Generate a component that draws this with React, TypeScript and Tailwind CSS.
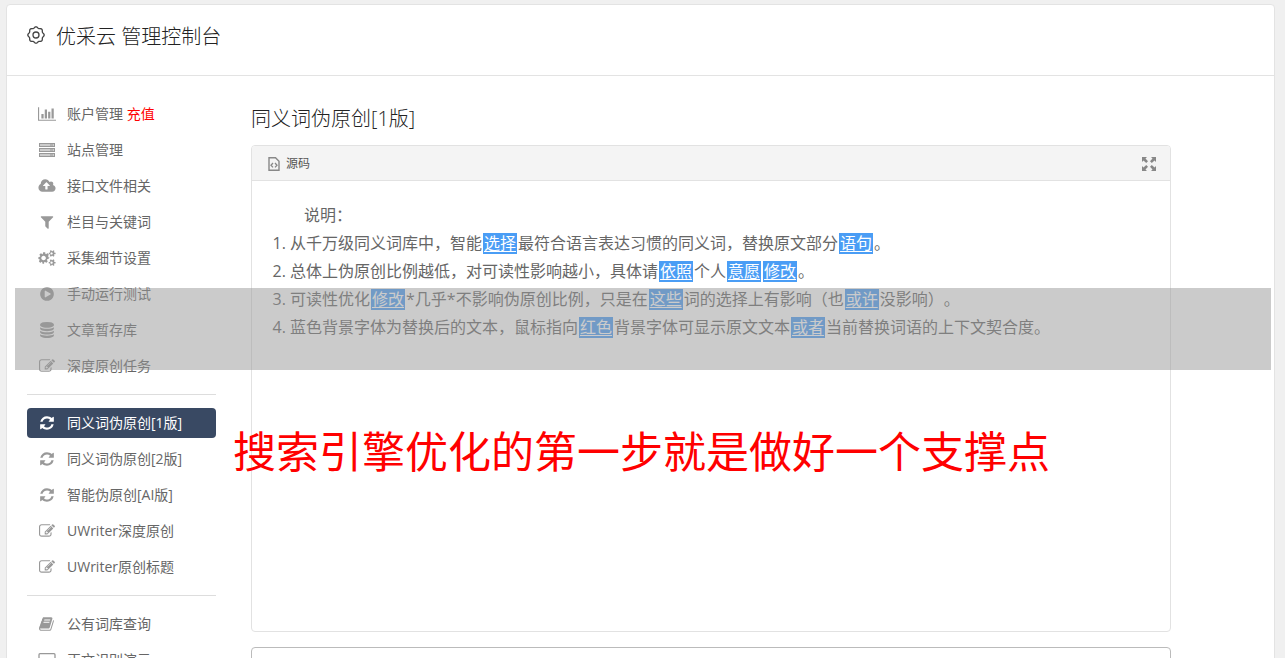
import type { ReactNode } from 'react';

const PATHS = {
  chart:
    'M640 896v512H384V896h256zm384-512v1024H768V384h256zm1024 1152v128H0V128h128v1408h1920zm-640-896v768h-256V640h256zm384-384v1152h-256V256h256z',
  upload:
    'M1280 864q0-14-9-23L919 489q-9-9-23-9t-23 9L522 840q-10 12-10 24 0 14 9 23t23 9h224v352q0 13 9.5 22.5t22.5 9.5h192q13 0 22.5-9.5t9.5-22.5V896h224q13 0 22.5-9.5t9.5-22.5zm640 288q0 159-112.5 271.5T1536 1536H448q-185 0-316.5-131.5T0 1088q0-130 70-240t188-165q-2-30-2-43 0-212 150-362t362-150q156 0 285.5 87T1242 446q71-62 166-62 106 0 181 75t75 181q0 76-41 138 130 31 213.5 135.5T1920 1152z',
  filter:
    'M1595 295q17 41-14 70l-493 493v742q0 42-39 59-13 5-25 5-27 0-45-19l-256-256q-19-19-19-45V858L211 365q-31-29-14-70 17-39 59-39h1280q42 0 59 39z',
  cogs:
    'M832 896q0-106-75-181t-181-75-181 75-75 181 75 181 181 75 181-75 75-181zm768 512q0-52-38-90t-90-38-90 38-38 90q0 53 37.500 90.500t90.500 37.500 90.500-37.500 37.500-90.500zm0-1024q0-52-38-90t-90-38-90 38-38 90q0 53 37.500 90.500T1472 512t90.500-37.500T1600 384zm-448 421v185q0 10-7 19.500t-16 10.500l-155 24q-11 35-32 76 34 48 90 115 7 11 7 20 0 12-7 19-23 30-82.500 89.500t-78.500 59.500q-11 0-21-7l-115-90q-37 19-77 31-11 108-23 155-7 24-30 24H483q-11 0-20-7.500t-10-17.500l-23-153q-34-10-75-31l-118 89q-7 7-20 7-11 0-21-8-144-133-144-160 0-9 7-19 10-14 41-53t47-61q-23-44-35-82l-152-24q-10-1-17-9.500T0 987V802q0-10 7-19.500t16-10.500l155-24q11-35 32-76-34-48-90-115-7-11-7-20 0-12 7-20 22-30 82-89t79-59q11 0 21 7l115 90q34-18 77-32 11-108 23-154 7-24 30-24h186q11 0 20 7.500t10 17.500l23 153q34 10 75 31l118-89q8-7 20-7 11 0 21 8 144 133 144 160 0 8-7 19-12 16-42 54t-45 60q23 48 34 82l152 23q10 2 17 10.500t7 19.500zm768 533v140q0 16-149 31-12 27-30 52 51 113 51 138 0 4-4 7-122 71-124 71-8 0-46-47t-52-68q-20 2-30 2t-30-2q-14 21-52 68t-46 47q-2 0-124-71-4-3-4-7 0-25 51-138-18-25-30-52-149-15-149-31v-140q0-16 149-31 13-29 30-52-51-113-51-138 0-4 4-7 4-2 35-20t59-34 30-16q8 0 46 46.500t52 67.500q20-2 30-2t30 2q51-71 92-112l6-2q4 0 124 70 4 3 4 7 0 25-51 138 17 23 30 52 149 15 149 31zm0-1024v140q0 16-149 31-12 27-30 52 51 113 51 138 0 4-4 7-122 71-124 71-8 0-46-47t-52-68q-20 2-30 2t-30-2q-14 21-52 68t-46 47q-2 0-124-71-4-3-4-7 0-25 51-138-18-25-30-52-149-15-149-31V314q0-16 149-31 13-29 30-52-51-113-51-138 0-4 4-7 4-2 35-20t59-34 30-16q8 0 46 46.500t52 67.500q20-2 30-2t30 2q51-71 92-112l6-2q4 0 124 70 4 3 4 7 0 25-51 138 17 23 30 52 149 15 149 31z',
  refresh:
    'M1639 1056q0 5-1 7-64 268-268 434.500T892 1664q-146 0-282.500-55T366 1452l-129 129q-19 19-45 19t-45-19-19-45v-448q0-26 19-45t45-19h448q26 0 45 19t19 45-19 45l-137 137q71 66 161 102t187 36q134 0 250-65t186-179q11-17 53-117 8-23 30-23h192q13 0 22.500 9.500t9.500 22.500zm25-800v448q0 26-19 45t-45 19h-448q-26 0-45-19t-19-45 19-45l138-138Q1097 384 896 384q-134 0-250 65T460 628q-11 17-53 117-8 23-30 23H178q-13 0-22.500-9.500T146 736v-7q65-268 270-434.500T896 128q146 0 284 55.500T1425 340l130-129q19-19 45-19t45 19 19 45z',
  edit:
    'M888 1184l116-116-152-152-116 116v56h96v96h56zm440-720q-16-16-33 1L945 815q-17 17-1 33t33-1l350-350q17-17 1-33zm80 594v190q0 119-84.500 203.500T1120 1536H288q-119 0-203.500-84.500T0 1248V416q0-119 84.500-203.500T288 128h832q63 0 117 25 15 7 18 23 3 17-9 29l-49 49q-14 14-32 8-23-6-45-6H288q-66 0-113 47t-47 113v832q0 66 47 113t113 47h832q66 0 113-47t47-113v-126q0-13 9-22l64-64q15-15 35-7t20 29zm-96-738l288 288-672 672H640V992zm444 132l-92 92-288-288 92-92q28-28 68-28t68 28l152 152q28 28 28 68t-28 68z',
  database:
    'M896 768q237 0 443-43t325-127v170q0 69-103 128t-280 93.500-385 34.500-385-34.500T231 896 128 768V598q119 84 325 127t443 43zm0 768q237 0 443-43t325-127v170q0 69-103 128t-280 93.500-385 34.500-385-34.500-280-93.500-103-128v-170q119 84 325 127t443 43zm0-384q237 0 443-43t325-127v170q0 69-103 128t-280 93.500-385 34.500-385-34.500-280-93.500-103-128V982q119 84 325 127t443 43zM896 0q208 0 385 34.500t280 93.500 103 128v128q0 69-103 128t-280 93.500T896 640t-385-34.500T231 512 128 384V256q0-69 103-128t280-93.500T896 0z',
  play:
    'M896 128q209 0 385.500 103T1561 510.500 1664 896t-103 385.500-279.500 279.500T896 1664t-385.500-103T231 1281.500 128 896t103-385.500T510.500 231 896 128zm384 823q32-18 32-55t-32-55L736 521q-31-19-64-1-32 19-32 56v640q0 37 32 56 16 8 32 8 17 0 32-9z',
  book:
    'M1639 478q40 57 18 129l-275 906q-19 64-76.500 107.500T1183 1664H260q-77 0-148.500-53.500T12 1479q-24-67-2-127 0-4 3-27t4-37q1-8-3-21.500t-3-19.500q2-11 8-21t16.500-23.500T52 1179q23-38 45-91.500t30-91.500q3-10 .5-30t-.5-28q3-11 17-28t17-23q21-36 42-92t25-90q1-9-2.500-32t.5-28q4-13 22-30.500t22-22.500q19-26 42.500-84.500T340 411q1-8-3-25.500t-2-26.500q2-8 9-18t18-23 17-21q8-12 16.500-30.500t15-35 16-36 19.500-32T469.500 140t36-11.500T555 134l-1 3q38-9 51-9h761q74 0 114 56t18 130l-274 906q-36 119-71.500 153.500T1024 1408H155q-27 0-38 15-11 16-1 43 24 70 144 70h923q29 0 56-15.500t35-41.500l300-987q7-22 5-57 38 15 59 43zm-1064 2q-4 13 2 22.500t20 9.500h608q13 0 25.500-9.500T1247 480l21-64q4-13-2-22.500t-20-9.500H638q-13 0-25.500 9.500T596 416zm-83 256q-4 13 2 22.500t20 9.500h608q13 0 25.500-9.500t16.500-22.500l21-64q4-13-2-22.500t-20-9.500H555q-13 0-25.500 9.500T513 672z',
};

function Glyph({ name, box = '0 0 1792 1792' }: { name: keyof typeof PATHS; box?: string }) {
  return (
    <svg viewBox={box} className="h-4 w-[18px]" fill="currentColor" aria-hidden="true">
      <path d={PATHS[name]} />
    </svg>
  );
}

function ServerIcon() {
  return (
    <svg viewBox="0 0 16 14" className="h-[14px] w-4" aria-hidden="true">
      {[0, 5, 10].map((y) => (
        <g key={y} fill="none" stroke="currentColor">
          <rect x="0.5" y={y + 0.5} width="15" height="3" fill="#ccc" />
          <path d={`M11 ${y + 2}h3`} />
        </g>
      ))}
    </svg>
  );
}

function LaptopIcon() {
  return (
    <svg viewBox="0 0 18 14" className="h-[14px] w-[18px]" aria-hidden="true">
      <rect x="1" y="0.700" width="16" height="10" rx="1" fill="none" stroke="currentColor" strokeWidth="1.300" />
      <path d="M0 12h18v1q0 1-1 1H1q-1 0-1-1z" fill="currentColor" />
    </svg>
  );
}

const gearOutline =
  Array.from({ length: 97 }, (_, i) => {
    const t = (i / 96) * Math.PI * 2;
    const r = 7.6 + 0.6 * Math.cos(8 * t);
    return `${i ? 'L' : 'M'}${(9 + r * Math.cos(t)).toFixed(2)} ${(9 + r * Math.sin(t)).toFixed(2)}`;
  }).join('') + 'z';

function GearIcon() {
  return (
    <svg viewBox="0 0 18 18" className="h-[18px] w-[18px]" fill="none" stroke="#444" strokeWidth="1.300" aria-hidden="true">
      <path d={gearOutline} strokeLinejoin="round" />
      <circle cx="9" cy="9" r="3" />
    </svg>
  );
}

function SourceIcon() {
  return (
    <svg viewBox="0 0 12 14" className="h-[14px] w-3" fill="none" stroke="#888" aria-hidden="true">
      <path d="M1 .7h6.500l3.500 3.500v9H1z" strokeWidth="1.400" />
      <path d="M5 6 3 8.200l2 2.200M7 6l2 2.200-2 2.200" strokeWidth="1.300" />
    </svg>
  );
}

function MaximizeIcon() {
  const arrow = 'M0 0h5L3.500 1.500 6 4.200 4.200 6 1.500 3.500 0 5z';
  return (
    <svg viewBox="0 0 14 14" className="h-[14px] w-[14px]" fill="#888" aria-hidden="true">
      <path d={arrow} />
      <path d={arrow} transform="matrix(-1 0 0 1 14 0)" />
      <path d={arrow} transform="matrix(1 0 0 -1 0 14)" />
      <path d={arrow} transform="matrix(-1 0 0 -1 14 14)" />
    </svg>
  );
}

type Item = { label: string; icon: ReactNode; extra?: string; active?: boolean };

const groups: Item[][] = [
  [
    { label: '账户管理', extra: '充值', icon: <Glyph name="chart" box="0 0 2048 1792" /> },
    { label: '站点管理', icon: <ServerIcon /> },
    { label: '接口文件相关', icon: <Glyph name="upload" box="0 0 1920 1792" /> },
    { label: '栏目与关键词', icon: <Glyph name="filter" /> },
    { label: '采集细节设置', icon: <Glyph name="cogs" box="0 0 1920 1792" /> },
    { label: '手动运行测试', icon: <Glyph name="play" /> },
    { label: '文章暂存库', icon: <Glyph name="database" /> },
    { label: '深度原创任务', icon: <Glyph name="edit" /> },
  ],
  [
    { label: '同义词伪原创[1版]', active: true, icon: <Glyph name="refresh" /> },
    { label: '同义词伪原创[2版]', icon: <Glyph name="refresh" /> },
    { label: '智能伪原创[AI版]', icon: <Glyph name="refresh" /> },
    { label: 'UWriter深度原创', icon: <Glyph name="edit" /> },
    { label: 'UWriter原创标题', icon: <Glyph name="edit" /> },
  ],
  [
    { label: '公有词库查询', icon: <Glyph name="book" /> },
    { label: '正文识别演示', icon: <LaptopIcon /> },
  ],
];

function Sidebar() {
  return (
    <nav className="w-[189px] shrink-0">
      {groups.map((items, g) => (
        <ul
          key={g}
          className={`flex flex-col gap-[6px] ${g > 0 ? 'mt-[13px] border-t border-[#ddd] pt-[13px]' : ''}`}
        >
          {items.map((item) => (
            <li key={item.label}>
              <a
                href="#"
                className={`flex h-[30px] items-center rounded-[4px] text-sm ${
                  item.active ? 'bg-[#394963] text-white' : 'text-[#666]'
                }`}
              >
                <span className={`flex w-10 justify-center ${item.active ? 'text-white' : 'text-[#999]'}`}>
                  {item.icon}
                </span>
                <span>
                  {item.label}
                  {item.extra && <span className="text-[#f00]"> {item.extra}</span>}
                </span>
              </a>
            </li>
          ))}
        </ul>
      ))}
    </nav>
  );
}

function Mark({ children }: { children: ReactNode }) {
  return (
    <a href="#" className="mx-px inline-block bg-[#4a9df5] px-px leading-[21px] text-white underline underline-offset-2">
      {children}
    </a>
  );
}

function Editor() {
  return (
    <section className="rounded-[4px] border border-[#e2e2e2]">
      <div className="flex h-[35px] items-center justify-between rounded-t-[3px] border-b border-[#e2e2e2] bg-[#f4f4f4] pt-[2px] pr-[14px] pl-4">
        <button type="button" className="flex items-center gap-[6px] text-xs text-[#555]">
          <SourceIcon />
          源码
        </button>
        <button type="button" aria-label="最大化">
          <MaximizeIcon />
        </button>
      </div>
      <div className="min-h-[450px] px-5 pt-5 text-base leading-7 text-[#666]">
        <p className="pl-8">说明：</p>
        <ol className="list-decimal pl-[18px]">
          <li>
            从千万级同义词库中，智能<Mark>选择</Mark>最符合语言表达习惯的同义词，替换原文部分<Mark>语句</Mark>。
          </li>
          <li>
            总体上伪原创比例越低，对可读性影响越小，具体请<Mark>依照</Mark>个人<Mark>意愿</Mark>
            <Mark>修改</Mark>。
          </li>
          <li>
            可读性优化<Mark>修改</Mark>*几乎*不影响伪原创比例，只是在<Mark>这些</Mark>词的选择上有影响（也
            <Mark>或许</Mark>没影响）。
          </li>
          <li>
            蓝色背景字体为替换后的文本，鼠标指向<Mark>红色</Mark>背景字体可显示原文文本<Mark>或者</Mark>
            当前替换词语的上下文契合度。
          </li>
        </ol>
      </div>
    </section>
  );
}

export default function App() {
  return (
    <div
      lang="zh-CN"
      className="relative h-screen overflow-hidden bg-[#f0f0f0] pt-1 pr-[10px] pl-[6px] font-['Open_Sans','Noto_Sans_CJK_SC',sans-serif] [text-spacing-trim:space-all]"
    >
      <div className="min-h-full rounded-t-[4px] border border-[#e3e3e3] bg-white">
        <header className="flex h-[71px] items-start gap-[11px] border-b border-[#e3e3e3] px-5 pt-[18px] text-[#222]">
          <span className="flex h-6 items-center">
            <GearIcon />
          </span>
          <h1 className="text-xl leading-7 font-light">优采云 管理控制台</h1>
        </header>
        <div className="flex gap-[35px] px-5 pt-[23px]">
          <Sidebar />
          <main className="flex max-w-[920px] flex-1 flex-col pt-[6px]">
            <h2 className="mb-3 text-xl leading-7 font-light text-[#222]">同义词伪原创[1版]</h2>
            <Editor />
            <textarea aria-label="原文" className="mt-[15px] h-40 w-full rounded-[4px] border border-[#bbb] p-3" />
          </main>
        </div>
      </div>
      <div className="pointer-events-none absolute top-[288px] right-[14px] left-[15px] h-[82px] bg-[#979797]/50" />
      <p className="pointer-events-none absolute top-[422px] left-[233px] text-[43px] leading-[60px] whitespace-nowrap text-[#f00]">
        搜索引擎优化的第一步就是做好一个支撑点
      </p>
    </div>
  );
}
